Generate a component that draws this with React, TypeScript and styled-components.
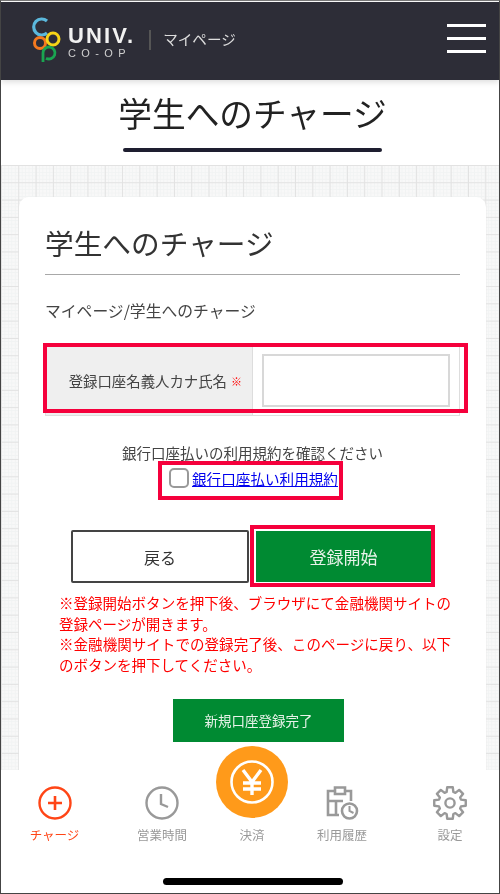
import React from 'react';
import styled, { createGlobalStyle } from 'styled-components';

const JP = `"Noto Sans CJK JP", "Noto Sans", sans-serif`;
const GRAY = '#999';
const ACTIVE = '#ff4516';

const GlobalStyle = createGlobalStyle`
  html, body {
    margin: 0;
    padding: 0;
    background: #fff;
  }
  * {
    box-sizing: border-box;
  }
`;

const Frame = styled.div`
  width: 500px;
  height: 894px;
  border: 1px solid #444;
  border-top: 1px solid #777;
  background: #fff;
  display: flex;
  flex-direction: column;
  overflow: hidden;
  font-family: ${JP};
  color: #333;
  filter: blur(0.55px);
`;

const Header = styled.header`
  flex: none;
  height: 78px;
  margin-top: 1px;
  background: #2d2d37;
  display: flex;
  align-items: center;
  padding: 0 13px 6px 31px;
  box-shadow: 0 2px 6px rgba(0, 0, 0, 0.14);
  position: relative;
  z-index: 1;
`;

const LogoMark = styled.svg`
  flex: none;
  margin-top: 10px;
`;

const LogoText = styled.div`
  display: flex;
  flex-direction: column;
  margin-top: 9px;
  color: #f1f1f1;
  font-family: 'Liberation Sans', sans-serif;
`;

const LogoMain = styled.span`
  font-size: 22px;
  line-height: 20px;
  font-weight: 700;
  letter-spacing: 2.1px;
`;

const LogoSub = styled.span`
  margin-top: 1px;
  font-size: 11px;
  line-height: 12px;
  letter-spacing: 5.4px;
  color: #cfcfcf;
`;

const Divider = styled.span`
  width: 2px;
  height: 20px;
  background: #555;
  margin: 4px 12px 0 14px;
`;

const HeaderLabel = styled.span`
  font-size: 14.6px;
  color: #ddd;
  flex: 1;
`;

const Burger = styled.div`
  width: 39px;
  display: flex;
  flex-direction: column;
  gap: 10px;
`;

const BurgerLine = styled.span`
  height: 3px;
  background: #fff;
`;

const TitleBand = styled.div`
  flex: none;
  height: 85px;
  padding: 11px 0 0 5px;
  display: flex;
  flex-direction: column;
  align-items: center;
`;

const PageTitle = styled.h1`
  margin: 0;
  font-size: 33.7px;
  line-height: 44px;
  font-weight: 400;
  color: #222;
`;

const TitleBar = styled.span`
  width: 259px;
  height: 4px;
  margin-top: 13px;
  border-radius: 2px;
  background: #1e1e30;
`;

const Content = styled.main`
  flex: 1;
  min-height: 0;
  padding: 32px 13px 0 18px;
  background-color: #f8f8f8;
  background-image:
    linear-gradient(to right, #e2e2e2 1px, transparent 1px),
    linear-gradient(to bottom, #e2e2e2 1px, transparent 1px),
    linear-gradient(to right, #f1f3f3 1px, transparent 1px),
    linear-gradient(to bottom, #f1f3f3 1px, transparent 1px);
  background-size: 17.3px 17.3px, 17.3px 17.3px, 3.46px 3.46px, 3.46px 3.46px;
  overflow: hidden;
`;

const Card = styled.section`
  height: 640px;
  background: #fff;
  border-radius: 10px 10px 0 0;
  padding: 26px 26px 0;
`;

const CardTitle = styled.h2`
  margin: 0;
  font-size: 28.7px;
  line-height: 40px;
  font-weight: 400;
  color: #333;
  padding-bottom: 11px;
  border-bottom: 1.5px solid #a8a8a8;
`;

const Breadcrumb = styled.p`
  margin: 26px 0 0;
  font-size: 15.8px;
  line-height: 20px;
  color: #444;
`;

const FormTable = styled.div`
  position: relative;
  margin-top: 25px;
  height: 70px;
  display: grid;
  grid-template-columns: 207px 1fr;
  border: 1px solid #ddd;
  border-top: none;
`;

const LabelCell = styled.div`
  background: #efefef;
  border-right: 1px solid #ddd;
  display: flex;
  align-items: center;
  justify-content: flex-end;
  padding: 0 10px 0 0;
  font-size: 14.4px;
  color: #444;
  white-space: nowrap;
`;

const Required = styled.span`
  color: #f00;
  font-size: 11px;
  font-weight: 700;
  margin-left: 4px;
`;

const InputCell = styled.div`
  padding: 8px 9px;
`;

const TextInput = styled.input`
  display: block;
  width: 100%;
  height: 53px;
  border: 2px solid #d8d8d8;
  background: #fff;
  outline: none;
`;

const Highlight = styled.span<{ $top: number; $left: number; $width: number; $height: number }>`
  position: absolute;
  top: ${(p) => p.$top}px;
  left: ${(p) => p.$left}px;
  width: ${(p) => p.$width}px;
  height: ${(p) => p.$height}px;
  border: 4px solid #f5003c;
  pointer-events: none;
`;

const ConsentText = styled.p`
  margin: 27px 0 0;
  font-size: 14.5px;
  line-height: 20px;
  text-align: center;
  color: #444;
`;

const ConsentRow = styled.div`
  position: relative;
  margin-top: 6px;
  height: 20px;
  display: flex;
  align-items: center;
  padding-left: 124px;
  gap: 3px;
`;

const Check = styled.input`
  appearance: none;
  flex: none;
  width: 20px;
  height: 20px;
  margin: 0 0 3px;
  border: 2px solid #999;
  border-radius: 5px;
  background: #fff;
`;

const TermsLink = styled.a`
  font-size: 14.6px;
  line-height: 20px;
  color: #0000ee;
  text-decoration: underline;
`;

const ButtonRow = styled.div`
  margin-top: 41px;
  padding-left: 26px;
  display: flex;
  align-items: center;
  gap: 7px;
`;

const BackButton = styled.button`
  width: 178px;
  height: 53px;
  border: 2px solid #444;
  border-radius: 2px;
  background: #fff;
  font-family: ${JP};
  font-size: 16px;
  color: #333;
  padding: 0;
`;

const PrimaryButton = styled.button`
  position: relative;
  width: 175px;
  height: 51px;
  border: none;
  background: #008a32;
  color: #e8f3ea;
  font-family: ${JP};
  font-size: 17px;
  padding: 0;
`;

const Notes = styled.div`
  margin: 10px 0 0 14px;
  width: 392px;
  font-size: 14.5px;
  line-height: 20.7px;
  color: #f00;
  text-align: justify;
`;

const NoteLine = styled.p`
  margin: 0;
`;

const DoneButton = styled.button`
  display: block;
  margin: 23px 0 0 128px;
  width: 171px;
  height: 43px;
  border: none;
  background: #008a32;
  color: #e8f3ea;
  font-family: ${JP};
  font-size: 13.5px;
  padding: 0;
`;

const Nav = styled.nav`
  flex: none;
  height: 123px;
  background: #fff;
  position: relative;
`;

const NavGrid = styled.div`
  display: grid;
  grid-template-columns: 107px 108px 72px 108px 108px;
`;

const NavItem = styled.div<{ $active?: boolean }>`
  position: relative;
  display: flex;
  flex-direction: column;
  align-items: center;
  padding-top: 16px;
  color: ${(p) => (p.$active ? ACTIVE : GRAY)};
`;

const NavIcon = styled.svg`
  display: block;
  width: 34px;
  height: 34px;
`;

const NavSpacer = styled.div`
  height: 34px;
`;

const NavLabel = styled.span`
  margin-top: 5px;
  font-size: 12.5px;
  line-height: 20px;
  white-space: nowrap;
`;

const PayBadge = styled.div`
  position: absolute;
  top: -24px;
  left: 0;
  width: 72px;
  height: 72px;
  border-radius: 50%;
  background: #ff9a1a;
  display: flex;
  align-items: center;
  justify-content: center;
`;

const HomeBar = styled.div`
  width: 180px;
  height: 7px;
  margin: 33px 0 0 162px;
  border-radius: 4px;
  background: #000;
`;

function Logo() {
  return (
    <LogoMark width="36" height="52" viewBox="0 0 36 52" fill="none">
      <path d="M15 4 A8 8 0 1 0 15 16" stroke="#5bb8dc" strokeWidth="3.2" />
      <circle cx="8" cy="26" r="5.5" stroke="#f4791f" strokeWidth="3" />
      <circle cx="21" cy="22" r="6" stroke="#f7d417" strokeWidth="3" />
      <path d="M11 45 V36 A6 6 0 1 1 14 41.2" stroke="#1aa551" strokeWidth="2.8" />
    </LogoMark>
  );
}

function ChargeIcon() {
  return (
    <NavIcon viewBox="0 0 34 34" fill="none" stroke="currentColor" strokeWidth="2.4">
      <circle cx="17" cy="17" r="15.5" />
      <path d="M17 10 V24 M10 17 H24" strokeWidth="2.6" />
    </NavIcon>
  );
}

function ClockIcon() {
  return (
    <NavIcon viewBox="0 0 34 34" fill="none" stroke="currentColor" strokeWidth="2.4">
      <circle cx="17" cy="17" r="15.5" />
      <path d="M16 8 V18 L23 21" />
    </NavIcon>
  );
}

function HistoryIcon() {
  return (
    <NavIcon viewBox="0 0 34 34" fill="none" stroke="currentColor" strokeWidth="2.6">
      <path d="M14 29 H3 V5 H10 M20 5 H26 V15" />
      <path d="M10 1.5 H20 V8 H10 Z" />
      <path d="M3 15 H18 M11 15 V29" />
      <circle cx="24.5" cy="25" r="7.5" />
      <path d="M24.5 20 V25 L28.5 27" strokeWidth="2" />
    </NavIcon>
  );
}

function GearIcon() {
  const teeth = [0, 45, 90, 135, 180, 225, 270, 315];
  const points = teeth
    .map((a) => {
      const at = (deg: number, r: number) => {
        const rad = ((a + deg - 90) * Math.PI) / 180;
        return `${(17 + r * Math.cos(rad)).toFixed(2)} ${(17 + r * Math.sin(rad)).toFixed(2)}`;
      };
      return `L${at(-17, 11.5)} L${at(-10, 16)} L${at(10, 16)} L${at(17, 11.5)}`;
    })
    .join(' ');
  return (
    <NavIcon viewBox="0 0 34 34" fill="none" stroke="currentColor" strokeWidth="2.4">
      <path d={`M${points.slice(1)} Z`} strokeLinejoin="round" />
      <circle cx="17" cy="17" r="4.6" />
    </NavIcon>
  );
}

function YenIcon() {
  return (
    <svg width="44" height="44" viewBox="0 0 44 44" fill="none" stroke="#fff">
      <circle cx="22" cy="22" r="20.5" strokeWidth="2.6" />
      <path d="M13 10 L22 22 L31 10 M22 22 V35 M13 23 H31 M13 29 H31" strokeWidth="3.4" />
    </svg>
  );
}

export default function App() {
  return (
    <>
      <GlobalStyle />
      <Frame>
        <Header>
          <Logo />
          <LogoText>
            <LogoMain>UNIV.</LogoMain>
            <LogoSub>CO-OP</LogoSub>
          </LogoText>
          <Divider />
          <HeaderLabel>マイページ</HeaderLabel>
          <Burger>
            <BurgerLine />
            <BurgerLine />
            <BurgerLine />
          </Burger>
        </Header>
        <TitleBand>
          <PageTitle>学生へのチャージ</PageTitle>
          <TitleBar />
        </TitleBand>
        <Content>
          <Card>
            <CardTitle>学生へのチャージ</CardTitle>
            <Breadcrumb>マイページ/学生へのチャージ</Breadcrumb>
            <FormTable>
              <LabelCell>
                登録口座名義人カナ氏名<Required>※</Required>
              </LabelCell>
              <InputCell>
                <TextInput type="text" />
              </InputCell>
              <Highlight $top={-3} $left={-3} $width={425} $height={70} />
            </FormTable>
            <ConsentText>銀行口座払いの利用規約を確認ください</ConsentText>
            <ConsentRow>
              <Check type="checkbox" />
              <TermsLink href="#">銀行口座払い利用規約</TermsLink>
              <Highlight $top={-8} $left={113} $width={185} $height={39} />
            </ConsentRow>
            <ButtonRow>
              <BackButton>戻る</BackButton>
              <PrimaryButton>
                登録開始
                <Highlight $top={-6} $left={-6} $width={185} $height={62} />
              </PrimaryButton>
            </ButtonRow>
            <Notes>
              <NoteLine>※登録開始ボタンを押下後、ブラウザにて金融機関サイトの登録ページが開きます。</NoteLine>
              <NoteLine>※金融機関サイトでの登録完了後、このページに戻り、以下のボタンを押下してください。</NoteLine>
            </Notes>
            <DoneButton>新規口座登録完了</DoneButton>
          </Card>
        </Content>
        <Nav>
          <NavGrid>
            <NavItem $active>
              <ChargeIcon />
              <NavLabel>チャージ</NavLabel>
            </NavItem>
            <NavItem>
              <ClockIcon />
              <NavLabel>営業時間</NavLabel>
            </NavItem>
            <NavItem>
              <PayBadge>
                <YenIcon />
              </PayBadge>
              <NavSpacer />
              <NavLabel>決済</NavLabel>
            </NavItem>
            <NavItem>
              <HistoryIcon />
              <NavLabel>利用履歴</NavLabel>
            </NavItem>
            <NavItem>
              <GearIcon />
              <NavLabel>設定</NavLabel>
            </NavItem>
          </NavGrid>
          <HomeBar />
        </Nav>
      </Frame>
    </>
  );
}
